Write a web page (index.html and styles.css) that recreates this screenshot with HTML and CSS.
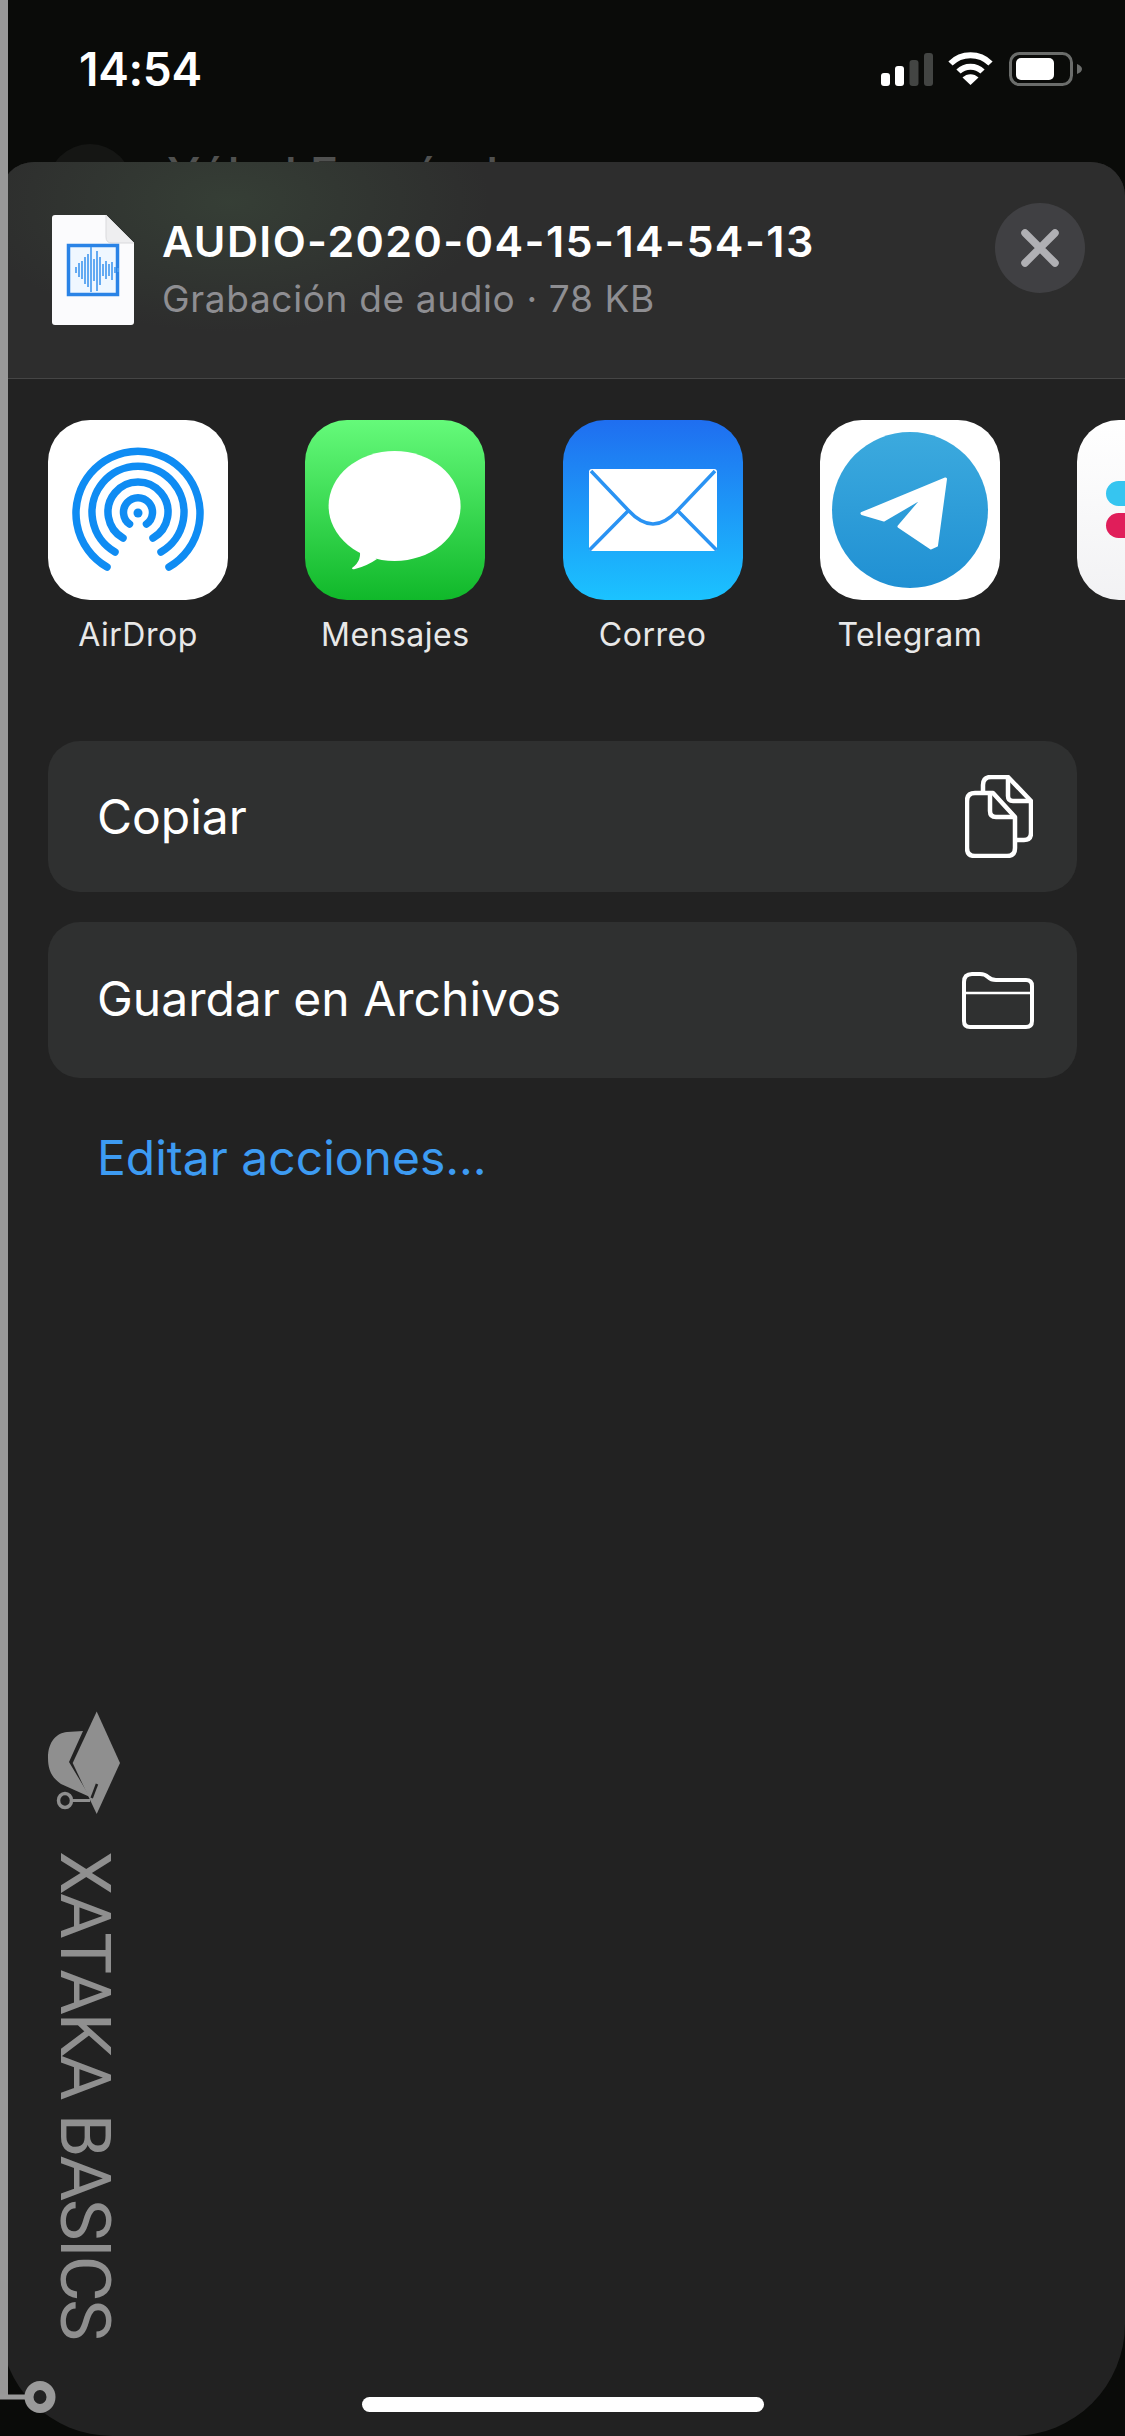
FILE: index.html
```html
<!DOCTYPE html>
<html lang="es">
<head>
<meta charset="utf-8">
<title>Compartir</title>
<link rel="stylesheet" href="styles.css">
</head>
<body>
<div class="screen">
  <div class="top">
    <div class="status">
      <span class="time">14:54</span>
      <div class="status-icons">
        <svg class="signal" width="52" height="33" viewBox="0 0 52 33">
          <rect x="0" y="20" width="9" height="13" rx="3" fill="#fff"/>
          <rect x="14" y="13" width="9" height="20" rx="3" fill="#fff"/>
          <rect x="28.500" y="7" width="9" height="26" rx="3" fill="#434543"/>
          <rect x="43" y="0" width="9" height="33" rx="3" fill="#434543"/>
        </svg>
        <svg class="wifi" width="45" height="33" viewBox="0 0 45 33">
          <path d="M2.500 11.500C13.500 0.500 31.500 0.500 42.500 11.500" fill="none" stroke="#fff" stroke-width="6" stroke-linecap="butt"/>
          <path d="M10.500 19.500C17 13 28 13 34.500 19.500" fill="none" stroke="#fff" stroke-width="6"/>
          <path d="M22.500 33L14.500 25.500C19 21 26 21 30.500 25.500Z" fill="#fff"/>
        </svg>
        <svg class="battery" width="73" height="34" viewBox="0 0 73 34">
          <rect x="1.500" y="1.500" width="61" height="31" rx="9" fill="none" stroke="#6b6d6b" stroke-width="3"/>
          <rect x="7" y="6" width="38" height="22" rx="5" fill="#fff"/>
          <path d="M68 12C71 13 73 15 73 17C73 19 71 21 68 22Z" fill="#6b6d6b"/>
        </svg>
      </div>
    </div>
    <div class="behind">
      <span class="avatar"></span>
      <span class="behind-name">Yúbal Fernández</span>
    </div>
  </div>

  <main class="sheet">
    <header class="head">
      <svg class="file" width="82" height="110" viewBox="0 0 82 110">
        <path d="M3 0H54L82 28V107Q82 110 79 110H3Q0 110 0 107V3Q0 0 3 0Z" fill="#fbfbfd"/>
        <path d="M54 0V22Q54 28 60 28H82Z" fill="#eeeef0" stroke="#d9d9dc" stroke-width="1"/>
        <rect x="16.500" y="30.500" width="49" height="49" fill="#eff7ff" stroke="#2a83e6" stroke-width="3.500"/>
        <path d="M22 55V55M25 52V58M28 48V62M31 46V64M34 42V69M37 39V72M40 32V77M43 44V66M46 36V76M49 42V70M52 49V61M55 46V64M58 49V61M61 47V65M64 52V58M67 53V57" transform="translate(-1 0)" stroke="#4b9df0" stroke-width="1.700" fill="none"/>
      </svg>
      <div class="head-text">
        <h1 class="title">AUDIO-2020-04-15-14-54-13</h1>
        <p class="subtitle">Grabación de audio · 78 KB</p>
      </div>
      <button class="close" aria-label="Cerrar">
        <svg width="38" height="38" viewBox="0 0 38 38"><path d="M4 4L34 34M34 4L4 34" stroke="#b0b0b4" stroke-width="7.500" stroke-linecap="round"/></svg>
      </button>
    </header>

    <section class="apps">
      <div class="app">
        <svg class="app-icon" width="180" height="180" viewBox="0 0 180 180">
          <rect width="180" height="180" rx="42" fill="#fff"/>
          <g fill="none" stroke="#0f8cf3" stroke-width="7.500" stroke-linecap="round">
            <path d="M59 147A62 62 0 1 1 121 147"/>
            <path d="M67 132A46 46 0 1 1 113 132"/>
            <path d="M75 118A30 30 0 1 1 105 118"/>
            <path d="M81.500 104A14.500 14.500 0 1 1 98.500 104"/>
          </g>
          <circle cx="90" cy="93" r="4.500" fill="#0f8cf3"/>
        </svg>
        <span class="app-label">AirDrop</span>
      </div>
      <div class="app">
        <svg class="app-icon" width="180" height="180" viewBox="0 0 180 180">
          <defs><linearGradient id="msg" x1="0" y1="0" x2="0" y2="1"><stop offset="0" stop-color="#65fa7a"/><stop offset="1" stop-color="#10b82a"/></linearGradient></defs>
          <rect width="180" height="180" rx="42" fill="url(#msg)"/>
          <ellipse cx="89.600" cy="86" rx="66" ry="55" fill="#fff"/>
          <path d="M54 128Q58 140 47 148Q47 150 50 149Q62 146 72 139Z" fill="#fff"/>
        </svg>
        <span class="app-label">Mensajes</span>
      </div>
      <div class="app">
        <svg class="app-icon" width="180" height="180" viewBox="0 0 180 180">
          <defs><linearGradient id="mail" x1="0" y1="0" x2="0" y2="1"><stop offset="0" stop-color="#1f6ef0"/><stop offset="1" stop-color="#1bc3ff"/></linearGradient></defs>
          <rect width="180" height="180" rx="42" fill="url(#mail)"/>
          <rect x="26" y="49" width="128" height="82" rx="3" fill="#fff"/>
          <g fill="none" stroke="#2a93f3" stroke-width="3.500">
            <path d="M28 51L65 90Q78 104 90 104Q102 104 115 90L152 51"/>
            <path d="M26.500 130L65 91M153.500 130L115 91"/>
          </g>
        </svg>
        <span class="app-label">Correo</span>
      </div>
      <div class="app">
        <svg class="app-icon" width="180" height="180" viewBox="0 0 180 180">
          <defs><linearGradient id="tg" x1="0" y1="0" x2="0" y2="1"><stop offset="0" stop-color="#3caade"/><stop offset="1" stop-color="#2090d3"/></linearGradient></defs>
          <rect width="180" height="180" rx="42" fill="#fff"/>
          <circle cx="90" cy="90" r="78" fill="url(#tg)"/>
          <path d="M125.500 59L42 93.500L64 100L105 76L79 106.500L111 128L116.500 125.500Z" fill="#fff" stroke="#fff" stroke-width="3" stroke-linejoin="round"/>
        </svg>
        <span class="app-label">Telegram</span>
      </div>
      <div class="app">
        <svg class="app-icon" width="180" height="180" viewBox="0 0 180 180">
          <defs><linearGradient id="sl" x1="0" y1="0" x2="0" y2="1"><stop offset="0" stop-color="#fff"/><stop offset="1" stop-color="#f2f2f4"/></linearGradient></defs>
          <rect width="180" height="180" rx="42" fill="url(#sl)"/>
          <rect x="29" y="61" width="62" height="25" rx="12.500" fill="#36c5f0"/>
          <rect x="29" y="93" width="62" height="25" rx="12.500" fill="#e01e5a"/>
        </svg>
        <span class="app-label"></span>
      </div>
    </section>

    <section class="actions">
      <div class="action action-copy">
        <span class="action-label">Copiar</span>
        <svg width="68" height="83" viewBox="0 0 68 83">
          <g fill="none" stroke="#fff" stroke-width="4.500" stroke-linejoin="round">
            <path d="M18 18V10Q18 2 26 2H43L66 26V58Q66 65 59 65H50"/>
            <path d="M43 2V21Q43 26 48 26H66"/>
            <path d="M10 18H28L50 42V73Q50 81 42 81H10Q2 81 2 73V26Q2 18 10 18Z"/>
            <path d="M25 18V36Q25 42 31 42H50"/>
          </g>
        </svg>
      </div>
      <div class="action action-files">
        <span class="action-label">Guardar en Archivos</span>
        <svg width="72" height="57" viewBox="0 0 72 57">
          <g fill="none" stroke="#fff" stroke-linejoin="round">
            <path stroke-width="4" d="M2 10Q2 2 10 2H18Q23 2 26 5Q29 8 34 8H64Q70 8 70 14V49Q70 55 64 55H8Q2 55 2 49Z"/>
            <path stroke-width="2.500" d="M2 21H70"/>
          </g>
        </svg>
      </div>
      <a class="edit">Editar acciones...</a>
    </section>

    <div class="home"></div>
  </main>

  <div class="wm-line"></div>
  <svg class="wm-ring" width="60" height="40" viewBox="0 0 60 40">
    <path d="M0 20H26" stroke="#9a9a9a" stroke-width="5" fill="none"/>
    <ellipse cx="40" cy="20" rx="11" ry="11.500" fill="none" stroke="#9a9a9a" stroke-width="9"/>
  </svg>
  <svg class="wm-logo" width="74" height="104" viewBox="0 0 74 104">
    <path d="M49.700 0.500L73 52L49.700 103L25.700 52Z" fill="#8f8f8f"/>
    <path d="M36 20L22 51L43 86L14 73C4 66 1 58 1 47C1 30 10 22 20 21Z" fill="#8f8f8f"/>
    <path d="M50 73L44.700 87" stroke="#222" stroke-width="2.500" fill="none"/>
    <path d="M26 89.500H43" stroke="#8f8f8f" stroke-width="3" fill="none"/>
    <ellipse cx="18" cy="89.500" rx="6.500" ry="7" fill="#222" stroke="#8f8f8f" stroke-width="3.500"/>
  </svg>
  <span class="wm-text">XATAKA BASICS</span>
</div>
</body>
</html>
```

FILE: styles.css
```css
* { box-sizing: border-box; }
html, body { margin: 0; padding: 0; background: #0a0b09; }
body { font-family: Inter, "Noto Sans", "Liberation Sans", sans-serif; color: #fff; }

.screen { position: relative; width: 1125px; height: 2436px; overflow: hidden; background: #0a0b09; }

.top { height: 162px; overflow: hidden; padding: 52px 43px 0 79px; }
.status { display: flex; justify-content: space-between; align-items: flex-start; height: 34px; }
.time { font-size: 46px; font-weight: 600; line-height: 34px; letter-spacing: -0.3px; }
.status-icons { display: flex; align-items: flex-start; }
.signal { margin-top: 1px; margin-right: 15px; }
.wifi { margin-right: 16px; }

.behind { display: flex; align-items: flex-start; margin: 58px 0 0 -31px; }
.avatar { width: 84px; height: 84px; border-radius: 50%; background: #151614; flex: none; }
.behind-name { margin: 3px 0 0 35px; font-size: 48px; line-height: 56px; font-weight: 500; color: #505150; white-space: nowrap; }

.sheet {
  display: flex; flex-direction: column; height: 2274px;
  background: #222222;
  border-radius: 34px 34px 112px 112px;
  overflow: hidden;
}

.head {
  display: flex; align-items: flex-start; height: 217px;
  padding: 41px 40px 0 52px;
  border-bottom: 1px solid #454545;
  background:
    radial-gradient(ellipse 260px 130px at 230px 40px, rgba(70, 95, 70, .35), rgba(70, 95, 70, 0)),
    #2d2d2d;
}
.file { flex: none; margin-top: 12px; }
.head-text { flex: 1; margin: 12px 0 0 28px; }
.title { margin: 0; font-size: 43px; line-height: 52px; font-weight: 600; letter-spacing: 1.4px; white-space: nowrap; }
.subtitle { margin: 10px 0 0; font-size: 37px; line-height: 44px; font-weight: 400; color: #8e8e92; letter-spacing: 0.65px; white-space: nowrap; }
.close { flex: none; display: flex; align-items: center; justify-content: center; width: 90px; height: 90px; padding: 0; border: 0; border-radius: 50%; background: #404043; }

.apps { display: flex; gap: 77.300px; padding: 41px 0 0 48px; }
.app { flex: none; display: flex; flex-direction: column; align-items: center; width: 180px; }
.app-icon { display: block; flex: none; }
.app-label { margin-top: 15px; font-size: 32px; line-height: 40px; color: #e8e8e8; white-space: nowrap; letter-spacing: 0.5px; }

.actions { display: flex; flex-direction: column; padding: 86px 48px 0; }
.action {
  display: flex; align-items: center; justify-content: space-between;
  padding: 0 43px 0 49px; background: #2f3030; border-radius: 32px;
  font-size: 48px; color: #fff;
}
.action-copy { height: 151px; padding-right: 44px; }
.action-files { height: 156px; margin-top: 30px; }
.action-files .action-label { margin-bottom: 3px; }
.action-label { line-height: 56px; }
.edit { display: block; margin: 52px 0 0 49px; font-size: 48px; line-height: 56px; color: #3d9bf2; }

.home { flex: none; align-self: center; width: 402px; height: 15px; margin: auto 0 24px; border-radius: 8px; background: #fff; }

.wm-line { position: absolute; left: 0; top: 0; width: 8px; height: 2399px; background: #989898; }
.wm-ring { position: absolute; left: 0; top: 2377px; }
.wm-logo { position: absolute; left: 47px; top: 1711px; }
.wm-text {
  position: absolute; left: 47px; top: 1851px;
  writing-mode: vertical-rl;
  font-family: Roboto, "Liberation Sans", sans-serif; font-size: 70px; line-height: 76px; color: #8f8f8f; letter-spacing: -2px; white-space: nowrap;
}
```
